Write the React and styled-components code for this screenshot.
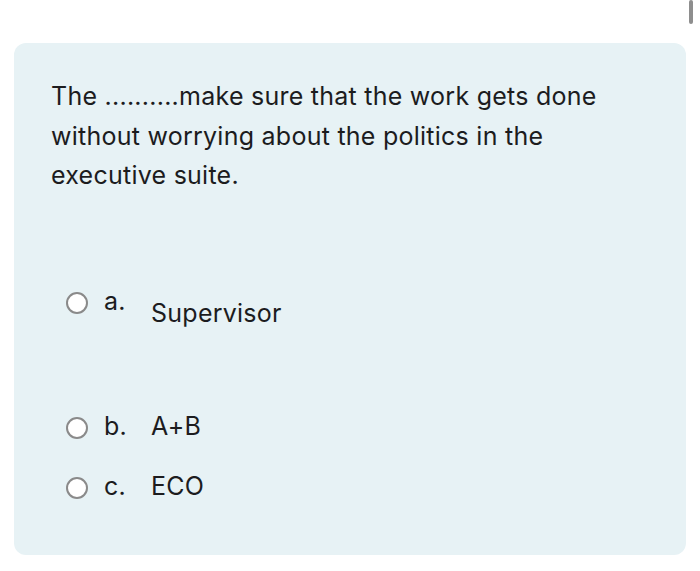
import React from "react";
import styled, { createGlobalStyle } from "styled-components";

const Global = createGlobalStyle`
  html, body { margin: 0; padding: 0; background: #fff; }
  body { font-family: Inter, "Liberation Sans", Arial, sans-serif; color: #1c1c1e; }
`;

const Page = styled.div`
  position: relative;
  width: 700px;
  height: 571px;
  padding: 43px 14px 0 14px;
  box-sizing: border-box;
`;

const Scrollbar = styled.div`
  position: absolute;
  top: 0;
  right: 7px;
  width: 4px;
  height: 24px;
  border-radius: 2px;
  background: #8e8e8e;
`;

const Card = styled.div`
  background: #e7f2f5;
  border-radius: 12px;
  height: 512px;
  box-sizing: border-box;
  padding: 34px 37px 0 37px;
`;

const Question = styled.p`
  margin: 0;
  font-size: 25px;
  letter-spacing: 0.25px;
  line-height: 39.5px;
  width: 575px;
`;

const Options = styled.div`
  display: flex;
  flex-direction: column;
  margin-top: 91px;
  padding-left: 15px;
`;

const Option = styled.label`
  display: flex;
  align-items: flex-start;
  height: ${(p) => p.h}px;
  font-size: 25px;
  letter-spacing: 0.25px;
`;

const Radio = styled.span`
  flex: none;
  width: 18px;
  height: 18px;
  border: 2px solid #8a8a8a;
  border-radius: 50%;
  background: #fff;
  margin-top: ${(p) => p.top}px;
`;

const Letter = styled.span`
  width: 47px;
  margin-left: 16px;
  line-height: 28px;
  margin-top: ${(p) => p.top}px;
`;

const Answer = styled.span`
  line-height: 28px;
  margin-top: ${(p) => p.top}px;
`;

const opts = [
  { l: "a.", t: "Supervisor", h: 125, rt: 5, lt: 0, at: 12 },
  { l: "b.", t: "A+B", h: 60, rt: 5, lt: 0, at: 0 },
  { l: "c.", t: "ECO", h: 60, rt: 5, lt: 0, at: 0 },
];

export default function App() {
  return (
    <>
      <Global />
      <Page>
        <Scrollbar />
        <Card>
          <Question>
            The ..........make sure that the work gets done without worrying about the politics in the executive suite.
          </Question>
          <Options>
            {opts.map((o) => (
              <Option key={o.l} h={o.h}>
                <Radio top={o.rt} />
                <Letter top={o.lt}>{o.l}</Letter>
                <Answer top={o.at}>{o.t}</Answer>
              </Option>
            ))}
          </Options>
        </Card>
      </Page>
    </>
  );
}
